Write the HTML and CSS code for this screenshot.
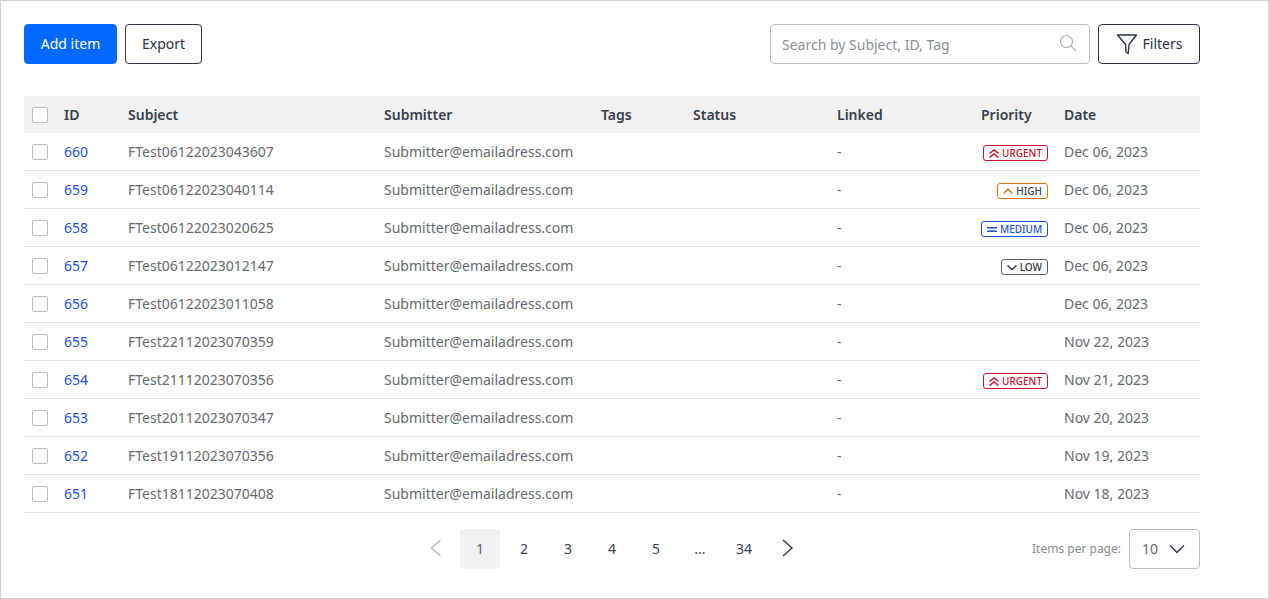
FILE: index.html
```html
<!DOCTYPE html>
<html>
<head lang="en">
    <meta charset="UTF-8">
    <title>Items</title>
    <link rel="stylesheet" href="styles.css">
</head>
<body>

<div class="frame">
    <div class="toolbar">
        <button class="btn btn-primary">Add item</button>
        <button class="btn btn-outline btn-export">Export</button>
        <div class="search">
            <span class="search-text">Search by Subject, ID, Tag</span>
            <svg class="search-icon" width="18" height="18" viewBox="0 0 18 18" fill="none" stroke="#b4b4b4" stroke-width="1.2"><circle cx="7.5" cy="7.5" r="6"/><path d="M12 12l5 5"/></svg>
        </div>
        <button class="btn btn-outline btn-filters">
            <svg width="22" height="22" viewBox="0 0 22 22" fill="none" stroke="#2b3443" stroke-width="1.4" stroke-linejoin="round"><path d="M1.500 2h19l-7.500 9.500-.8 9-2.200-1.500-.5-7.500z"/></svg>
            <span>Filters</span>
        </button>
    </div>

    <table class="grid">
        <colgroup>
            <col class="c-check"><col class="c-id"><col class="c-subject"><col class="c-submitter"><col class="c-tags"><col class="c-status"><col class="c-linked"><col class="c-priority"><col class="c-date">
        </colgroup>
        <thead>
            <tr>
                <th><span class="check"></span></th><th>ID</th><th>Subject</th><th>Submitter</th><th>Tags</th><th>Status</th><th>Linked</th><th>Priority</th><th>Date</th>
            </tr>
        </thead>
        <tbody>
            <tr>
                <td><span class="check"></span></td><td class="id">660</td><td>FTest06122023043607</td><td>Submitter@emailadress.com</td><td></td><td></td><td>-</td>
                <td class="prio"><span class="tag tag-urgent"><svg width="12" height="9" viewBox="0 0 12 9" fill="none" stroke="#d5102c" stroke-width="1.5"><path d="M1.500 4.500L6 1l4.500 3.500M1.500 8.500L6 5l4.500 3.500"/></svg>URGENT</span></td><td>Dec 06, 2023</td>
            </tr>
            <tr>
                <td><span class="check"></span></td><td class="id">659</td><td>FTest06122023040114</td><td>Submitter@emailadress.com</td><td></td><td></td><td>-</td>
                <td class="prio"><span class="tag tag-high"><svg width="12" height="9" viewBox="0 0 12 9" fill="none" stroke="#d9780f" stroke-width="1.5"><path d="M1.500 6.500L6 2.500l4.500 4"/></svg>HIGH</span></td><td>Dec 06, 2023</td>
            </tr>
            <tr>
                <td><span class="check"></span></td><td class="id">658</td><td>FTest06122023020625</td><td>Submitter@emailadress.com</td><td></td><td></td><td>-</td>
                <td class="prio"><span class="tag tag-medium"><svg width="12" height="9" viewBox="0 0 12 9" fill="none" stroke="#1a4fe0" stroke-width="1.5"><path d="M1 2.700h10M1 6.300h10"/></svg>MEDIUM</span></td><td>Dec 06, 2023</td>
            </tr>
            <tr>
                <td><span class="check"></span></td><td class="id">657</td><td>FTest06122023012147</td><td>Submitter@emailadress.com</td><td></td><td></td><td>-</td>
                <td class="prio"><span class="tag tag-low"><svg width="12" height="9" viewBox="0 0 12 9" fill="none" stroke="#2b3443" stroke-width="1.5"><path d="M1.500 2.500L6 6.500l4.500-4"/></svg>LOW</span></td><td>Dec 06, 2023</td>
            </tr>
            <tr>
                <td><span class="check"></span></td><td class="id">656</td><td>FTest06122023011058</td><td>Submitter@emailadress.com</td><td></td><td></td><td>-</td><td></td><td>Dec 06, 2023</td>
            </tr>
            <tr>
                <td><span class="check"></span></td><td class="id">655</td><td>FTest22112023070359</td><td>Submitter@emailadress.com</td><td></td><td></td><td>-</td><td></td><td>Nov 22, 2023</td>
            </tr>
            <tr>
                <td><span class="check"></span></td><td class="id">654</td><td>FTest21112023070356</td><td>Submitter@emailadress.com</td><td></td><td></td><td>-</td>
                <td class="prio"><span class="tag tag-urgent"><svg width="12" height="9" viewBox="0 0 12 9" fill="none" stroke="#d5102c" stroke-width="1.5"><path d="M1.500 4.500L6 1l4.500 3.500M1.500 8.500L6 5l4.500 3.500"/></svg>URGENT</span></td><td>Nov 21, 2023</td>
            </tr>
            <tr>
                <td><span class="check"></span></td><td class="id">653</td><td>FTest20112023070347</td><td>Submitter@emailadress.com</td><td></td><td></td><td>-</td><td></td><td>Nov 20, 2023</td>
            </tr>
            <tr>
                <td><span class="check"></span></td><td class="id">652</td><td>FTest19112023070356</td><td>Submitter@emailadress.com</td><td></td><td></td><td>-</td><td></td><td>Nov 19, 2023</td>
            </tr>
            <tr>
                <td><span class="check"></span></td><td class="id">651</td><td>FTest18112023070408</td><td>Submitter@emailadress.com</td><td></td><td></td><td>-</td><td></td><td>Nov 18, 2023</td>
            </tr>
        </tbody>
    </table>

    <div class="footer">
        <ul class="pager">
            <li><svg width="14" height="18" viewBox="0 0 14 18" fill="none" stroke="#b8b8b8" stroke-width="1.4"><path d="M11.500 1L2.500 9l9 8"/></svg></li>
            <li class="selected">1</li>
            <li>2</li>
            <li>3</li>
            <li>4</li>
            <li>5</li>
            <li>...</li>
            <li>34</li>
            <li><svg width="14" height="18" viewBox="0 0 14 18" fill="none" stroke="#2b3443" stroke-width="1.4"><path d="M2 1l9 8-9 8"/></svg></li>
        </ul>
        <div class="per-page">
            <span class="per-label">Items per page:</span>
            <div class="select">
                <span class="select-value">10</span>
                <svg width="16" height="10" viewBox="0 0 16 10" fill="none" stroke="#2b3443" stroke-width="1.4"><path d="M1 1.500l7 7 7-7"/></svg>
            </div>
        </div>
    </div>
</div>

</body>
</html>
```

FILE: styles.css
```css
* {
    margin: 0;
    padding: 0;
    box-sizing: border-box;
}

ul {
    list-style: none;
}

body {
    font-family: "Noto Sans", sans-serif;
    font-size: 14px;
    color: #666a6f;
    background: #fff;
}

.frame {
    width: 1269px;
    height: 599px;
    border: 1px solid #d2d2d2;
    padding: 23px 68px 0 23px;
    overflow: hidden;
}

.toolbar {
    display: flex;
    align-items: center;
    height: 40px;
}

.btn {
    height: 40px;
    padding-bottom: 2px;
    border-radius: 4px;
    font-family: inherit;
    font-size: 14px;
    background: #fff;
    border: 1px solid #2b3443;
    color: #2b3443;
}

.btn-primary {
    width: 93px;
    background: #0069ff;
    border-color: #0069ff;
    color: #fff;
}

.btn-export {
    width: 77px;
    margin-left: 8px;
}

.btn-filters {
    width: 102px;
    margin-left: 8px;
    padding-bottom: 0;
    display: flex;
    align-items: center;
    justify-content: center;
    gap: 5px;
}

.btn-filters span {
    margin-top: -2px;
}

.search {
    width: 320px;
    height: 40px;
    margin-left: auto;
    border: 1px solid #bdbdbd;
    border-radius: 4px;
    padding: 0 12px 0 11px;
    display: flex;
    align-items: center;
    justify-content: space-between;
}

.search-text {
    color: #8a8f96;
}

.search-icon {
    margin-top: -3px;
}

.grid {
    width: 1176px;
    margin-top: 32px;
    border-collapse: separate;
    border-spacing: 0;
    table-layout: fixed;
}

.c-check { width: 40px; }
.c-id { width: 64px; }
.c-subject { width: 256px; }
.c-submitter { width: 217px; }
.c-tags { width: 92px; }
.c-status { width: 144px; }
.c-linked { width: 144px; }
.c-priority { width: 83px; }
.c-date { width: 136px; }

.grid th {
    height: 37px;
    background: #f1f1f1;
    text-align: left;
    font-weight: 600;
    color: #363e4b;
}

.grid td {
    height: 38px;
    border-bottom: 1px solid #e4e4e4;
    white-space: nowrap;
}

.grid th:first-child,
.grid td:first-child {
    padding-left: 8px;
}

.check {
    display: block;
    width: 16px;
    height: 16px;
    background: #fff;
    border: 1px solid #bdbdbd;
    border-radius: 2px;
}

.grid .id {
    color: #1a4fe0;
}

.grid .prio {
    padding-right: 16px;
    text-align: right;
}

.tag {
    display: inline-flex;
    align-items: center;
    height: 16px;
    padding: 0 5px 0 4px;
    gap: 2px;
    border: 1px solid;
    border-radius: 3px;
    font-size: 10px;
    font-weight: 500;
    vertical-align: middle;
}

.tag-urgent {
    border-color: #d5102c;
    color: #c8102c;
}

.tag-high {
    border-color: #d9780f;
    color: #3a4250;
}

.tag-medium {
    border-color: #1a4fe0;
    color: #1a4fe0;
}

.tag-low {
    border-color: #5f6368;
    color: #2b3443;
}

.footer {
    display: grid;
    grid-template-columns: 1fr auto 1fr;
    margin-top: 16px;
}

.pager {
    grid-column: 2;
    display: flex;
    gap: 4px;
}

.pager li {
    width: 40px;
    height: 40px;
    padding-bottom: 2px;
    display: flex;
    align-items: center;
    justify-content: center;
    border-radius: 4px;
    color: #3a4250;
}

.pager .selected {
    background: #f1f1f1;
    color: #5f6368;
}

.per-page {
    grid-column: 3;
    display: flex;
    align-items: center;
    justify-content: flex-end;
    gap: 8px;
}

.per-label {
    padding-bottom: 2px;
    font-size: 12px;
    color: #8a8f96;
}

.select {
    width: 71px;
    height: 40px;
    border: 1px solid #bdbdbd;
    border-radius: 4px;
    padding: 0 14px 0 12px;
    display: flex;
    align-items: center;
    justify-content: space-between;
}

.select-value {
    padding-bottom: 2px;
}
```
